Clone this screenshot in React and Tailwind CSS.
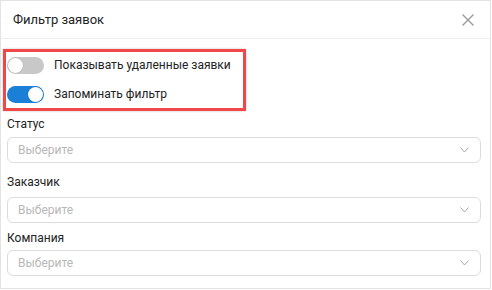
import React from "react";

function Toggle({ on }) {
    return (
        <div
            className={`relative w-[37px] h-[17px] rounded-full shrink-0 ${on ? "bg-[#1a7fd7]" : "bg-[#c8c8c8]"}`}
        >
            <div
                className={`absolute top-[1px] w-[15px] h-[15px] rounded-full bg-white shadow-[0_0_1px_rgba(0,0,0,0.3)] ${on ? "right-[1px]" : "left-[1px]"}`}
            />
        </div>
    );
}

function Select() {
    return (
        <div className="flex items-center justify-between h-[26px] rounded-[6px] border border-[#dcdcdc] pl-[10px] pr-[11px]">
            <span className="text-[12px] text-[#b8b8b8]">Выберите</span>
            <svg width="9" height="6" viewBox="0 0 9 6" fill="none">
                <path d="M0.5 0.5 L4.5 5 L8.5 0.5" stroke="#a8a8a8" strokeWidth="1" />
            </svg>
        </div>
    );
}

export default function App() {
    return (
        <div
            className="w-[491px] h-[289px] border border-[#e3e3e3] bg-white text-[#222]"
            style={{ fontFamily: "Roboto, 'Liberation Sans', sans-serif" }}
        >
            <div className="flex items-center justify-between h-[38px] border-b border-[#eeeeee] pl-[12px] pr-[16px]">
                <span className="text-[13px]">Фильтр заявок</span>
                <svg width="12" height="12" viewBox="0 0 12 12" fill="none">
                    <path d="M0.5 0.5 L11.5 11.5 M11.5 0.5 L0.5 11.5" stroke="#9a9a9a" strokeWidth="1.4" />
                </svg>
            </div>

            <div className="px-[6px]">
                <div className="mt-[10px] ml-[-4px] w-[243px] h-[62px] border-[3px] border-[#f04848] shadow-[0_0_2px_rgba(0,0,0,0.25)] pl-[1px] pt-[5px] flex flex-col gap-[12px]">
                    <div className="flex items-center gap-[10px] whitespace-nowrap">
                        <Toggle on={false} />
                        <span className="text-[12px] leading-[17px]">Показывать удаленные заявки</span>
                    </div>
                    <div className="flex items-center gap-[10px] whitespace-nowrap">
                        <Toggle on={true} />
                        <span className="text-[12px] leading-[17px]">Запоминать фильтр</span>
                    </div>
                </div>

                <div className="mt-[5px] text-[12px] leading-[16px]">Статус</div>
                <div className="mt-[5px] w-[474px]">
                    <Select />
                </div>

                <div className="mt-[11px] text-[12px] leading-[16px]">Заказчик</div>
                <div className="mt-[7px] w-[474px]">
                    <Select />
                </div>

                <div className="mt-[7px] text-[12px] leading-[16px]">Компания</div>
                <div className="mt-[4px] w-[474px]">
                    <Select />
                </div>
            </div>
        </div>
    );
}
